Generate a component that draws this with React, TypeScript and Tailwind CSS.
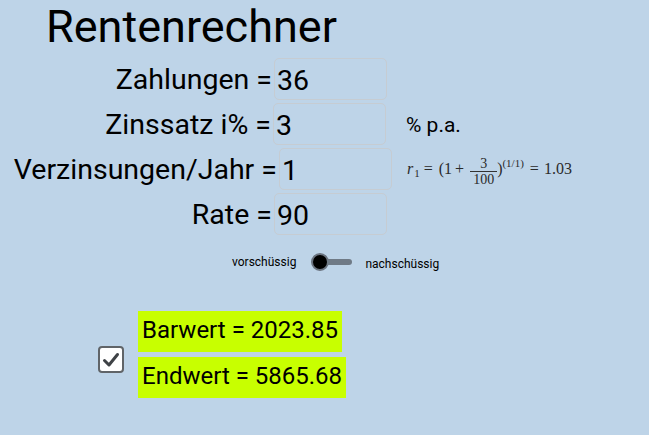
import { ReactNode } from "react"

// Eingabezeile: Beschriftung rechtsbündig, daneben das Feld
const Row = ({ label, value, labelW, children }: { label: string; value: string; labelW: string; children?: ReactNode }) => {
  return (
    <div className="flex items-center h-[42px]">
      <div className={`${labelW} text-right text-[28.5px] leading-[40px] pt-[2px] whitespace-nowrap`}>{label}</div>
      <div className="ml-[2px] w-[113px] h-[42px] rounded-[5px] border border-[#c6ccd2] text-[28.5px] leading-[40px] pt-[2px] pl-[2px]">
        {value}
      </div>
      {children}
    </div>
  )
}

const Formula = () => {
  return (
    <div className="ml-[15px] h-[42px] flex items-center text-[#2a2a2a] text-[16px] font-['Liberation_Serif',serif] whitespace-nowrap">
      <span className="italic">r</span>
      <span className="text-[11px] relative top-[4px] ml-[1px]">1</span>
      <span className="ml-[4px]">=</span>
      <span className="ml-[6px]">(1</span>
      <span className="ml-[3px]">+</span>
      <span className="ml-[6px] flex flex-col items-center text-[14px] leading-[15px] mt-[4px]">
        <span className="border-b border-[#333] px-[3px] w-full text-center">3</span>
        <span className="px-[3px]">100</span>
      </span>
      <span>)</span>
      <span className="text-[11px] relative -top-[6px]">(1/1)</span>
      <span className="ml-[6px]">=</span>
      <span className="ml-[5px]">1.03</span>
    </div>
  )
}

const App = () => {
  return (
    <div className="w-[649px] h-[435px] bg-[#bed4e8] text-black font-['Roboto',sans-serif] overflow-hidden">
      <h1 className="pl-[46px] text-[45px] leading-[53px]">Rentenrechner</h1>

      <div className="mt-[5px] flex flex-col gap-[3px]">
        <Row label="Zahlungen =" value="36" labelW="w-[272px]" />
        <Row label="Zinssatz i% =" value="3" labelW="w-[271px]">
          <span className="ml-[20px] text-[21px] leading-[40px] pt-[2px]">% p.a.</span>
        </Row>
        <Row label="Verzinsungen/Jahr =" value="1" labelW="w-[277px]">
          <Formula />
        </Row>
        <Row label="Rate =" value="90" labelW="w-[272px]" />
      </div>

      {/* Umschalter vorschüssig / nachschüssig */}
      <div className="mt-[17px] ml-[232px] h-[20px] flex items-center text-[12px]">
        <span>vorschüssig</span>
        <div className="ml-[15px] flex items-center">
          <div className="w-[18px] h-[18px] rounded-full bg-black border-[2px] border-[#6b7480]" />
          <div className="-ml-[2px] w-[25px] h-[6px] rounded-r-full bg-[#6f7a86]" />
        </div>
        <span className="ml-[13px] mt-[3px]">nachschüssig</span>
      </div>

      <div className="mt-[39px] flex items-start">
        <div className="ml-[98px] mt-[35px] w-[26px] h-[27px] rounded-[4px] border-[2px] border-[#606468] bg-white flex items-center justify-center">
          <svg width="18" height="16" viewBox="0 0 18 16">
            <path d="M2.5 8.5 L7 13 L15.5 2.5" fill="none" stroke="#3f4246" strokeWidth="3" strokeLinecap="round" strokeLinejoin="round" />
          </svg>
        </div>
        <div className="ml-[14px] flex flex-col items-start gap-[5px]">
          <div className="h-[41px] bg-[#c8ff00] px-[4px] text-[24px] leading-[39px]">Barwert = 2023.85</div>
          <div className="h-[41px] bg-[#c8ff00] px-[4px] text-[24px] leading-[39px]">Endwert = 5865.68</div>
        </div>
      </div>
    </div>
  )
}

export default App
